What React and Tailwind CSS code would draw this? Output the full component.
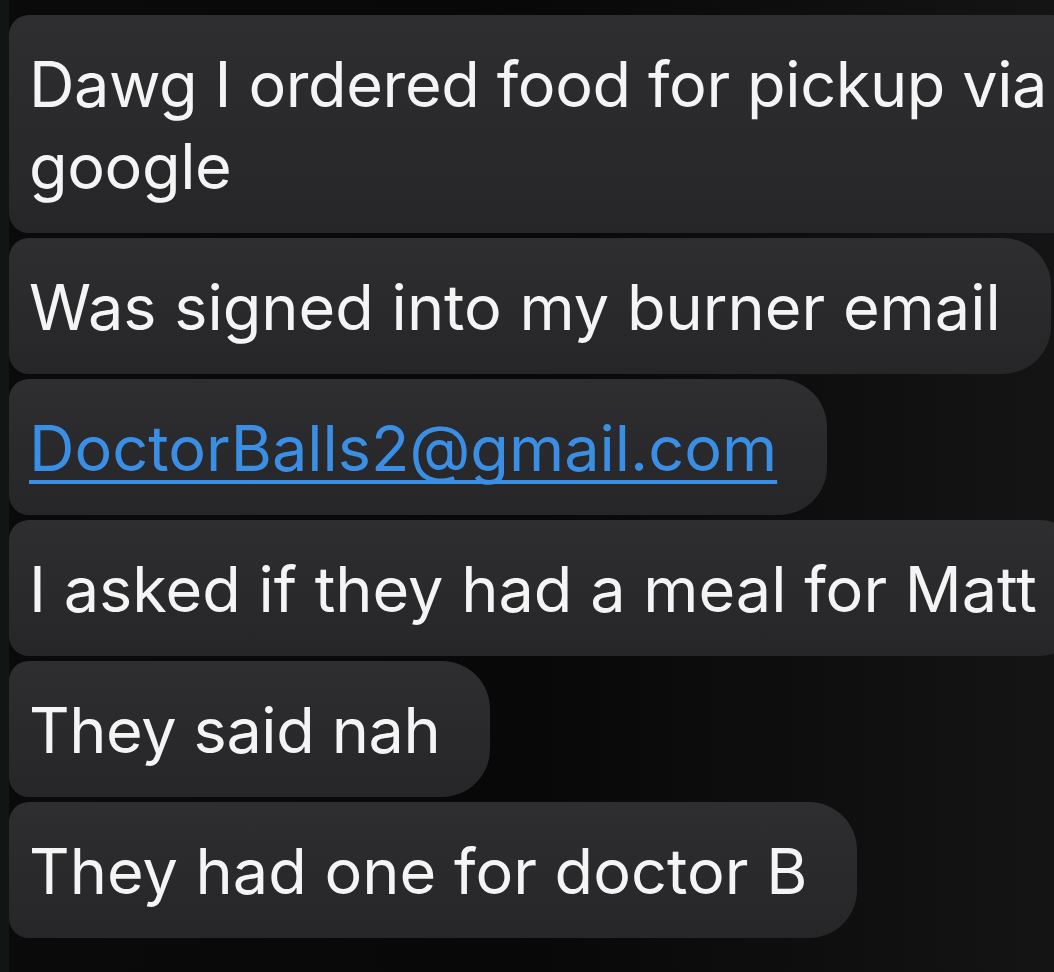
import React from "react";

const messages = [
  { lines: ["Dawg I ordered food for pickup via", "google"], tight: true },
  { lines: ["Was signed into my burner email"] },
  { lines: ["DoctorBalls2@gmail.com"], link: true },
  { lines: ["I asked if they had a meal for Matt"] },
  { lines: ["They said nah"], tight: true },
  { lines: ["They had one for doctor B"] },
];

function Bubble({ lines, link, tight }) {
  const tone = link
    ? "text-[#3a8ee4] underline decoration-[4px] underline-offset-[9px] [text-decoration-skip-ink:none]"
    : "text-[#f4f4f4]";
  return (
    <div className="w-fit shrink-0 whitespace-nowrap rounded-l-[20px] rounded-r-[48px] bg-gradient-to-b from-[#2e2e30] to-[#262628] pl-[20px] pr-[50px] pt-[28px] pb-[26px]">
      {lines.map((line, i) => (
        <div
          key={i}
          className={
            (tight ? "tracking-[-0.4px] " : "") +
            "text-[63px] leading-[82px] " +
            tone
          }
        >
          {line}
        </div>
      ))}
    </div>
  );
}

export default function App() {
  return (
    <div
      className="relative flex h-[972px] w-[1054px] overflow-hidden bg-gradient-to-r from-[#0a0a0a] via-[#080808] to-[#141414]"
      style={{ fontFamily: "Inter, 'Liberation Sans', sans-serif" }}
    >
      <div className="w-[9px] shrink-0 bg-[#101613]" />
      <div className="flex min-w-0 flex-1 flex-col gap-[5px] pt-[15px]">
        {messages.map((m, i) => (
          <Bubble key={i} {...m} />
        ))}
      </div>
    </div>
  );
}
